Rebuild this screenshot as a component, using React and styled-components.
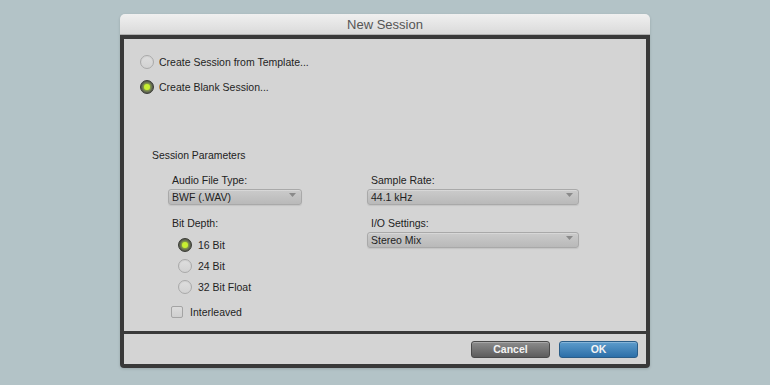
import React from 'react';
import styled, { createGlobalStyle } from 'styled-components';

const GlobalStyle = createGlobalStyle`
  html, body {
    margin: 0;
    padding: 0;
    background: #b3c3c7;
  }
  body {
    font-family: "Liberation Sans", Arial, Helvetica, sans-serif;
    color: #222;
  }
`;

const Page = styled.div`
  width: 770px;
  height: 385px;
  padding: 14px 0 0 120px;
  box-sizing: border-box;
`;

const Window = styled.div`
  width: 530px;
  display: flex;
  flex-direction: column;
  border-radius: 5px 5px 4px 4px;
  box-shadow: 0 1px 3px rgba(0, 0, 0, 0.15);
`;

const TitleBar = styled.div`
  height: 21px;
  display: flex;
  align-items: center;
  justify-content: center;
  background: linear-gradient(#f0f0f0, #dadada);
  border-radius: 5px 5px 0 0;
  border-bottom: 1px solid #b0b0b0;
  box-sizing: border-box;
  font-size: 13px;
  color: #555;
`;

const Frame = styled.div`
  background: #393939;
  padding: 4px;
  display: flex;
  flex-direction: column;
  gap: 3px;
  border-radius: 0 0 4px 4px;
`;

const UpperPanel = styled.div`
  height: 292px;
  background: #d4d4d4;
  padding: 16px 0 0 16px;
  box-sizing: border-box;
  display: flex;
  flex-direction: column;
`;

const LowerPanel = styled.div`
  height: 30px;
  background: #d4d4d4;
  display: flex;
  align-items: center;
  justify-content: flex-end;
  gap: 9px;
  padding-right: 8px;
`;

const OptionRow = styled.div`
  display: flex;
  align-items: center;
  gap: ${(p) => p.$gap || 5}px;
  height: 14px;
  margin-top: ${(p) => p.$mt || 0}px;
  margin-left: ${(p) => p.$ml || 0}px;
  font-size: 10.5px;
  color: #1f1f1f;
`;

const Radio = styled.span`
  width: 14px;
  height: 14px;
  border-radius: 50%;
  box-sizing: border-box;
  flex: none;
  display: flex;
  align-items: center;
  justify-content: center;
  background: ${(p) => (p.$on ? 'radial-gradient(circle, #5e5e5e 50%, #3c3c3c)' : 'linear-gradient(#dedede, #d2d2d2)')};
  border: 1px solid ${(p) => (p.$on ? '#363636' : '#a9a9a9')};
  box-shadow: ${(p) => (p.$on ? 'none' : 'inset 0 1px 1px rgba(0, 0, 0, 0.06)')};

  &::after {
    content: '';
    display: ${(p) => (p.$on ? 'block' : 'none')};
    width: 6px;
    height: 6px;
    border-radius: 50%;
    background: #c8f032;
    box-shadow: 0 0 3px 1px rgba(180, 230, 40, 0.75);
  }
`;

const Checkbox = styled.span`
  width: 12px;
  height: 12px;
  box-sizing: border-box;
  border: 1px solid #a4a4a4;
  border-radius: 2px;
  background: linear-gradient(#dcdcdc, #cfcfcf);
  flex: none;
`;

const Heading = styled.div`
  margin: 55px 0 0 12px;
  font-size: 10.4px;
  line-height: 13px;
`;

const Params = styled.div`
  margin-left: 28px;
  display: grid;
  grid-template-columns: 134px 212px;
  column-gap: 65px;
`;

const Column = styled.div`
  display: flex;
  flex-direction: column;
`;

const Label = styled.div`
  font-size: 10.5px;
  line-height: 13px;
  padding-left: 4px;
  margin-top: ${(p) => p.$mt}px;
`;

const Select = styled.div`
  height: 16px;
  margin-top: 2px;
  box-sizing: border-box;
  border: 1px solid #a9a9a9;
  border-radius: 3px;
  background: linear-gradient(#cbcbcb, #b9b9b9);
  box-shadow: inset 0 1px 0 rgba(255, 255, 255, 0.25), 0 1px 1px rgba(0, 0, 0, 0.08);
  display: flex;
  justify-content: space-between;
  padding: 0 5px 0 3px;
  font-size: 10.5px;
  line-height: 14px;
  color: #1e1e1e;
`;

const Arrow = styled.svg`
  margin-top: 3px;
  flex: none;
`;

const Button = styled.div`
  width: 77px;
  height: 15px;
  border-radius: 3px;
  display: flex;
  align-items: center;
  justify-content: center;
  font-size: 10.5px;
  font-weight: bold;
  color: #f4f4f4;
  background: ${(p) => (p.$primary ? 'linear-gradient(#5d9ccc, #2c6fa8)' : 'linear-gradient(#8c8c8c, #5c5c5c)')};
  border: 1px solid ${(p) => (p.$primary ? '#2a5d88' : '#4a4a4a')};
  box-shadow: inset 0 1px 0 rgba(255, 255, 255, 0.25);
`;

function SelectBox({ value }) {
  return (
    <Select>
      <span>{value}</span>
      <Arrow width="7" height="4" viewBox="0 0 7 4">
        <path d="M0 0 L7 0 L3.5 4 Z" fill="#8a8a8a" />
      </Arrow>
    </Select>
  );
}

export default function App() {
  return (
    <>
      <GlobalStyle />
      <Page>
        <Window>
          <TitleBar>New Session</TitleBar>
          <Frame>
            <UpperPanel>
              <OptionRow>
                <Radio />
                Create Session from Template...
              </OptionRow>
              <OptionRow $mt={11}>
                <Radio $on />
                Create Blank Session...
              </OptionRow>

              <Heading>Session Parameters</Heading>

              <Params>
                <Column>
                  <Label $mt={12}>Audio File Type:</Label>
                  <SelectBox value="BWF (.WAV)" />
                  <Label $mt={12}>Bit Depth:</Label>
                  <OptionRow $mt={8} $ml={10} $gap={6}>
                    <Radio $on />
                    16 Bit
                  </OptionRow>
                  <OptionRow $mt={7} $ml={10} $gap={6}>
                    <Radio />
                    24 Bit
                  </OptionRow>
                  <OptionRow $mt={7} $ml={10} $gap={6}>
                    <Radio />
                    32 Bit Float
                  </OptionRow>
                  <OptionRow $mt={11} $ml={3} $gap={7}>
                    <Checkbox />
                    Interleaved
                  </OptionRow>
                </Column>
                <Column>
                  <Label $mt={12}>Sample Rate:</Label>
                  <SelectBox value="44.1 kHz" />
                  <Label $mt={12}>I/O Settings:</Label>
                  <SelectBox value="Stereo Mix" />
                </Column>
              </Params>
            </UpperPanel>
            <LowerPanel>
              <Button>Cancel</Button>
              <Button $primary>OK</Button>
            </LowerPanel>
          </Frame>
        </Window>
      </Page>
    </>
  );
}
